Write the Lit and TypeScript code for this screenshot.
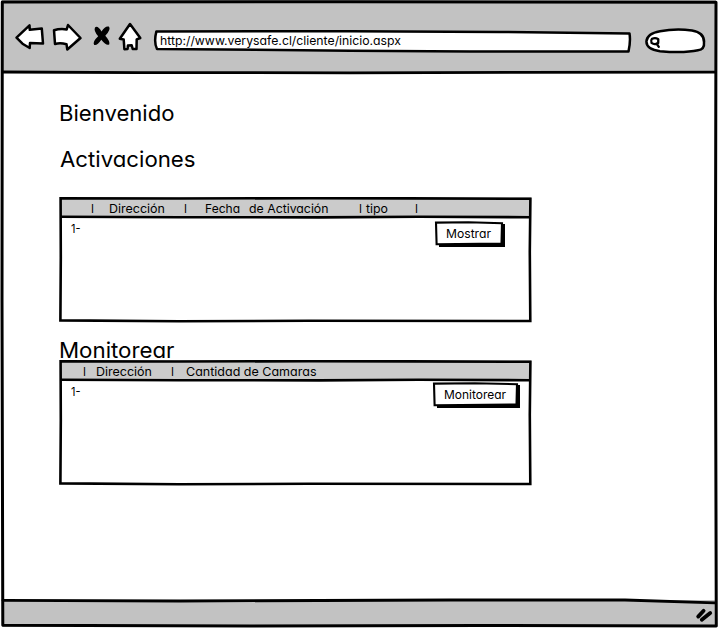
import { LitElement, html, css, svg } from "lit";
import { customElement, property } from "lit/decorators.js";

@customElement("sketch-label")
class SketchLabel extends LitElement {
  @property() text = "";
  @property({ type: Number }) width = 50;
  @property({ type: Number }) size = 12.2;

  static styles = css`
    :host {
      display: block;
      flex: none;
    }
    svg {
      display: block;
      overflow: visible;
    }
    text {
      font-family: Inter, "Liberation Sans", sans-serif;
      font-feature-settings: "cv11" 1;
      fill: #000;
      white-space: pre;
    }
  `;

  render() {
    const h = Math.round(this.size * 1.2);
    return html`<svg width=${this.width} height=${h}>
      <text
        x="0"
        y=${Math.round(this.size * 0.92)}
        font-size=${this.size}
        textLength=${this.width}
        lengthAdjust="spacingAndGlyphs"
      >${this.text}</text>
    </svg>`;
  }
}

interface Column {
  text: string;
  width: number;
  gap: number;
}

@customElement("sketch-table")
class SketchTable extends LitElement {
  @property({ attribute: false }) columns: Column[] = [];
  @property() action = "";
  @property({ type: Number }) actionWidth = 44;

  static styles = css`
    :host {
      display: block;
      position: relative;
      width: 473px;
      height: 125px;
    }
    .head {
      display: flex;
      height: 20px;
      box-sizing: border-box;
      padding-top: 5px;
      margin: 0 1px;
      background: #cbcbcb;
    }
    .body {
      display: flex;
      justify-content: space-between;
      padding: 4px 27px 0 12px;
    }
    .wide {
      padding-right: 12px;
    }
    .button {
      position: relative;
      box-sizing: border-box;
      padding: 6px 0 0 11px;
      height: 26px;
    }
    .wide .button {
      margin-top: -2px;
    }
    .row {
      padding-top: 1px;
    }
    .lines {
      position: absolute;
      left: 0;
      top: 0;
      overflow: visible;
      pointer-events: none;
    }
    .button sketch-label {
      position: relative;
    }
  `;

  render() {
    const w = this.actionWidth + 22;
    return html`
      <div class="head">
        ${this.columns.map(
          (c) => html`<sketch-label
            style="margin-left:${c.gap}px"
            .text=${c.text}
            .width=${c.width}
          ></sketch-label>`
        )}
      </div>
      <div class="body ${this.action.length > 8 ? "wide" : ""}">
        <sketch-label class="row" text="1-" .width=${9.5}></sketch-label>
        <div class="button" style="width:${w + 3}px">
          <svg class="lines" width=${w + 4} height="26">
            <path d="M4 23 L${w} 23 L${w} 3 L${w + 3} 3 L${w + 3} 26 L4 26Z" fill="#000" />
            <path
              d="M1 1.6 L${w / 2} 1.3 L${w} 2.2 L${w - 0.5} 22.6 L${w / 3} 23 L1.6 23.3Z"
              fill="#fff" stroke="#000" stroke-width="2.1"
            />
          </svg>
          <sketch-label .text=${this.action} .width=${this.actionWidth}></sketch-label>
        </div>
      </div>
      <svg class="lines" width="473" height="125" fill="none" stroke="#000" stroke-width="2.6">
        <path d="M1.6 1.3 L120 1.5 L250 1.2 L350 1.4 L471.4 1.8 L470.8 55 L471.3 124 L250 123.8 L120 124.2 L1.4 123.4 L1.8 60Z" />
        <path d="M1 19.7 L120 20.2 L260 20.4 L360 19.8 L471 20.2" />
      </svg>
    `;
  }
}

const ACTIVATIONS: Column[] = [
  { text: "I", width: 3, gap: 30.5 },
  { text: "Dirección", width: 56, gap: 15 },
  { text: "I", width: 3, gap: 19 },
  { text: "Fecha", width: 35, gap: 18.5 },
  { text: "de Activación", width: 79.5, gap: 8.5 },
  { text: "I", width: 3, gap: 31 },
  { text: "tipo", width: 22, gap: 3.5 },
  { text: "I", width: 3, gap: 27 },
];

const MONITORING: Column[] = [
  { text: "I", width: 3, gap: 22.5 },
  { text: "Dirección", width: 56, gap: 10.5 },
  { text: "I", width: 3, gap: 19 },
  { text: "Cantidad de Camaras", width: 130.5, gap: 11.5 },
];

const backIcon = svg`<path d="M16.5 37.6 L29.5 25.3 L29.8 29.8 L41.8 28.6 L43 43.5 L30 43 L29.7 48 L22.5 43.7Z"/>`;
const forwardIcon = svg`<path d="M54 30.2 Q60 28.4 66.7 29.4 L68 25 L80.5 38 L67.3 49.5 L66.5 44.2 Q60 42.5 55 44Z"/>`;
const stopIcon = svg`<path class="solid" d="M95 27.6 Q97.5 25 101.5 31.4 Q105.5 25.4 108.8 26.6 Q111.5 29.2 105.3 35.8 Q110.2 41.2 109.2 44.4 Q106.5 46.4 101.3 39.8 Q97 46 94.2 44.9 Q92 42 98.2 36.3 Q93.4 31 95 27.6Z"/>`;
const homeIcon = svg`<path d="M130 24 L140.3 38 L136.7 39.4 L136.5 48.9 L132.7 49 L131.7 45.2 L127.9 45.5 L127.6 49 L124.4 49.2 L123.7 39.5 L119.8 38.8Z"/>`;

@customElement("app-root")
class AppRoot extends LitElement {
  static styles = css`
    :host {
      display: flex;
      flex-direction: column;
      position: relative;
      width: 718px;
      height: 628px;
      overflow: hidden;
      background: #fff;
    }
    .toolbar {
      height: 73px;
      box-sizing: border-box;
      position: relative;
      padding: 34px 0 0 158px;
      margin: 0 2px;
      background: #c2c2c2;
    }
    .toolbar sketch-label {
      position: relative;
    }
    .icons,
    .frame {
      position: absolute;
      left: 0;
      top: 0;
      fill: #fff;
      stroke: #000;
      stroke-width: 2.5;
      stroke-linejoin: round;
      stroke-linecap: round;
      pointer-events: none;
    }
    .icons {
      left: -2px;
    }
    .solid {
      fill: #000;
      stroke: none;
    }
    .frame {
      fill: none;
      stroke-width: 3;
    }
    .page {
      flex: 1;
      padding: 28px 0 0 59px;
    }
    .second {
      margin: 20px 0 0 1px;
    }
    .first-table {
      margin-top: 24px;
    }
    .third {
      margin-top: 16px;
    }
    .second-table {
      margin-top: -4px;
    }
    .status {
      height: 27px;
      background: #c2c2c2;
      margin: 0 2px 1px;
    }
  `;

  render() {
    return html`
      <header class="toolbar">
        <svg class="icons" width="718" height="73">
          ${backIcon}${forwardIcon}${stopIcon}${homeIcon}
          <path d="M156.4 31.4 L350 31.3 L500 32 L629.5 33.5 Q630.8 41 628.5 51.5 L470 51.5 L350 50.7 L157 49 Q153.6 42 156.4 31.4Z" />
          <path d="M660 31.2 Q675 28.5 692 30.4 Q704.3 32.5 704 42 Q704.8 49.5 698 50.3 Q684 53.3 660 51.2 Q646.5 49.5 646.4 41.5 Q647 33.5 660 31.2Z" />
          <path d="M652 38.8 Q655.5 37.4 658.3 39.2 L658.2 43 Q654.6 45.3 651.5 42.9 Q650.5 40.5 652 38.8Z M656.5 43.5 L658.8 46.8" stroke-width="2.3" />
        </svg>
        <sketch-label text="http://www.verysafe.cl/cliente/inicio.aspx" .width=${241} .size=${12}></sketch-label>
      </header>
      <main class="page">
        <sketch-label text="Bienvenido" .width=${115.5} .size=${21.8}></sketch-label>
        <sketch-label class="second" text="Activaciones" .width=${135.5} .size=${21.8}></sketch-label>
        <sketch-table class="first-table" .columns=${ACTIVATIONS} action="Mostrar" .actionWidth=${45}></sketch-table>
        <sketch-label class="third" text="Monitorear" .width=${115.5} .size=${21.8}></sketch-label>
        <sketch-table class="second-table" .columns=${MONITORING} action="Monitorear" .actionWidth=${62}></sketch-table>
      </main>
      <footer class="status"></footer>
      <svg class="frame" width="718" height="628">
        <path d="M2.3 2 L350 1.8 L716 2.3 L715.4 300 L716.3 626 L480 625.4 L250 626 L2.8 625.2 L2 300Z" />
        <path d="M3 72 L140 72.6 L350 72.8 L520 72.3 L715 72.2" stroke-width="2.8" />
        <path d="M3 600.3 L180 601 L450 600 L625 600 L715 602.8" stroke-width="2.8" />
        <path d="M698.2 616.6 L703.6 610.8 M701.8 619.8 L710.2 613" stroke-width="3.8" />
      </svg>
    `;
  }
}
